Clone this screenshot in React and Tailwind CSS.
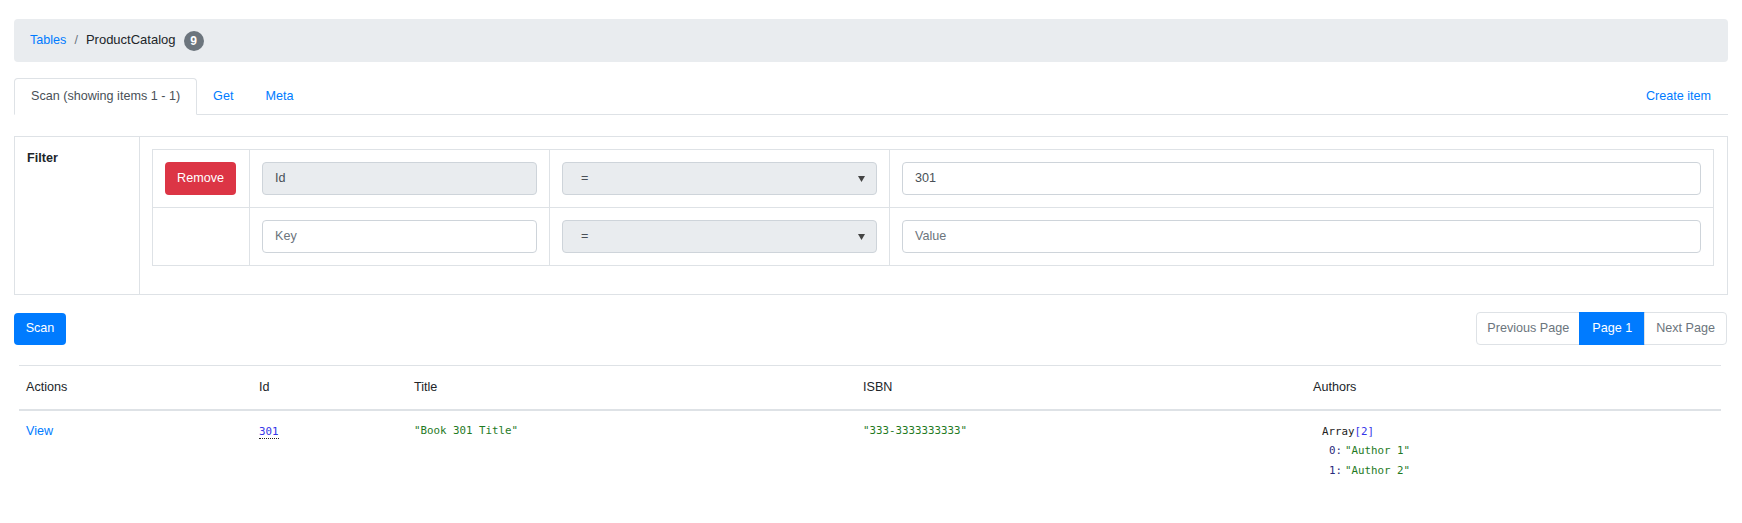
import React from "react";

function Caret() {
  return (
    <svg width="7" height="6" viewBox="0 0 7 6" className="shrink-0">
      <path d="M0 0 L7 0 L3.5 6 Z" fill="#444" />
    </svg>
  );
}

function SelectBox() {
  return (
    <div className="flex items-center justify-between h-[33px] rounded-[4px] border border-[#ced4da] bg-[#e9ecef] pl-[18px] pr-[11px] text-[#495057]">
      <span>=</span>
      <Caret />
    </div>
  );
}

export default function App() {
  const cell = "border border-[#dee2e6] px-[12px] py-[12px] align-middle";
  const mono = "font-['DejaVu_Sans_Mono','Liberation_Mono',monospace] text-[10.8px]";
  return (
    <div className="min-h-[523px] bg-white px-[14px] pt-[19px] font-['Liberation_Sans',Arial,sans-serif] text-[12.6px] leading-[18.9px] text-[#212529]">
      {/* Breadcrumb */}
      <nav className="flex items-center h-[43px] rounded-[4px] bg-[#e9ecef] pl-[16px]">
        <a className="text-[#007bff]">Tables</a>
        <span className="px-[8px] text-[#6c757d]">/</span>
        <span className="text-[13px]">ProductCatalog</span>
        <span className="ml-[8px] flex items-center justify-center h-[20px] min-w-[20px] px-[6px] rounded-full bg-[#6c757d] text-white font-bold text-[12px] leading-none">
          9
        </span>
      </nav>

      {/* Tabs */}
      <div className="mt-[16px] flex items-end h-[37px] border-b border-[#dee2e6]">
        <div className="-mb-px flex items-center h-[37px] px-[16px] border border-[#dee2e6] border-b-white rounded-t-[4px] bg-white text-[#495057]">
          Scan (showing items 1 - 1)
        </div>
        <div className="flex items-center h-[36px] px-[16px] text-[#007bff]">Get</div>
        <div className="flex items-center h-[36px] px-[16px] text-[#007bff]">Meta</div>
        <div className="ml-auto flex items-center h-[36px] px-[17px] text-[#007bff]">Create item</div>
      </div>

      {/* Filter card */}
      <div className="mt-[21px] flex border border-[#dee2e6]">
        <div className="w-[125px] shrink-0 border-r border-[#dee2e6] pl-[12px] pt-[12px] font-bold">
          Filter
        </div>
        <div className="flex-1 pt-[12px] pl-[12px] pr-[13px] pb-[28px]">
          <table className="w-full table-fixed border-collapse">
            <colgroup>
              <col className="w-[97px]" />
              <col className="w-[300px]" />
              <col className="w-[340px]" />
              <col />
            </colgroup>
            <tbody>
              <tr>
                <td className={cell}>
                  <div className="flex items-center justify-center h-[33px] w-[71px] rounded-[4px] bg-[#dc3545] text-white">
                    Remove
                  </div>
                </td>
                <td className={cell}>
                  <div className="flex items-center h-[33px] rounded-[4px] border border-[#ced4da] bg-[#e9ecef] px-[12px] text-[#495057]">
                    Id
                  </div>
                </td>
                <td className={cell}>
                  <SelectBox />
                </td>
                <td className={cell}>
                  <div className="flex items-center h-[33px] rounded-[4px] border border-[#ced4da] bg-white px-[12px] text-[#495057]">
                    301
                  </div>
                </td>
              </tr>
              <tr>
                <td className={cell}>
                  <div className="h-[33px]" />
                </td>
                <td className={cell}>
                  <div className="flex items-center h-[33px] rounded-[4px] border border-[#ced4da] bg-white px-[12px] text-[#6c757d]">
                    Key
                  </div>
                </td>
                <td className={cell}>
                  <SelectBox />
                </td>
                <td className={cell}>
                  <div className="flex items-center h-[33px] rounded-[4px] border border-[#ced4da] bg-white px-[12px] text-[#6c757d]">
                    Value
                  </div>
                </td>
              </tr>
            </tbody>
          </table>
        </div>
      </div>

      {/* Scan + pagination */}
      <div className="mt-[17px] flex items-center justify-between">
        <div className="flex items-center justify-center h-[32px] w-[52px] rounded-[4px] bg-[#007bff] text-white">
          Scan
        </div>
        <div className="flex h-[33px] mr-[1px]">
          <div className="flex items-center px-[10px] border border-[#dee2e6] rounded-l-[4px] text-[#6c757d] leading-[15.75px]">
            Previous Page
          </div>
          <div className="-ml-px flex items-center px-[12px] border border-[#007bff] bg-[#007bff] text-white leading-[15.75px]">
            Page 1
          </div>
          <div className="-ml-px flex items-center px-[11px] border border-[#dee2e6] rounded-r-[4px] text-[#6c757d] leading-[15.75px]">
            Next Page
          </div>
        </div>
      </div>

      {/* Results table */}
      <div className="mt-[20px] pl-[5px] pr-[7px]">
        <table className="w-full table-fixed border-collapse">
          <colgroup>
            <col className="w-[233px]" />
            <col className="w-[155px]" />
            <col className="w-[449px]" />
            <col className="w-[450px]" />
            <col />
          </colgroup>
          <thead>
            <tr>
              {["Actions", "Id", "Title", "ISBN", "Authors"].map((h) => (
                <th
                  key={h}
                  className="border-t border-b-2 border-[#dee2e6] px-[7px] py-[12px] text-left font-normal"
                >
                  {h}
                </th>
              ))}
            </tr>
          </thead>
          <tbody>
            <tr className="align-top">
              <td className="px-[7px] py-[11px]">
                <a className="text-[#007bff]">View</a>
              </td>
              <td className="px-[7px] py-[11px]">
                <span className={`${mono} text-[#3535e8] border-b border-dotted border-[#222]`}>
                  301
                </span>
              </td>
              <td className={`px-[7px] py-[11px] ${mono} text-[#1f7a1f]`}>
                "Book 301 Title"
              </td>
              <td className={`px-[7px] py-[11px] ${mono} text-[#1f7a1f]`}>
                "333-3333333333"
              </td>
              <td className={`px-[7px] py-[11px] ${mono} leading-[19.5px]`}>
                <div className="pl-[9px]">
                  <span className="text-[#222]">Array</span>
                  <span className="text-[#3535e8]">[2]</span>
                </div>
                <div className="pl-[16px]">
                  <span className="text-[#2a2a7a]">0:</span>
                  <span className="ml-[3px] text-[#1f7a1f]">"Author 1"</span>
                </div>
                <div className="pl-[16px]">
                  <span className="text-[#2a2a7a]">1:</span>
                  <span className="ml-[3px] text-[#1f7a1f]">"Author 2"</span>
                </div>
              </td>
            </tr>
          </tbody>
        </table>
      </div>
    </div>
  );
}
